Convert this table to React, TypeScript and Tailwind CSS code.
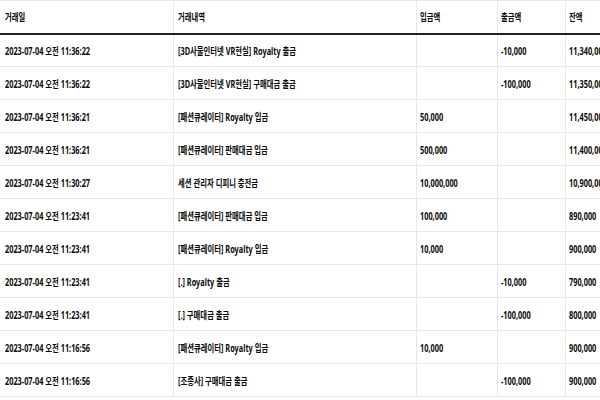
import React from 'react';

interface Row {
  date: string;
  desc: string;
  deposit: string;
  withdraw: string;
  balance: string;
}

const rows: Row[] = [
  { date: '2023-07-04 오전 11:36:22', desc: '[3D사물인터넷 VR현실] Royalty 출금', deposit: '', withdraw: '-10,000', balance: '11,340,000' },
  { date: '2023-07-04 오전 11:36:22', desc: '[3D사물인터넷 VR현실] 구매대금 출금', deposit: '', withdraw: '-100,000', balance: '11,350,000' },
  { date: '2023-07-04 오전 11:36:21', desc: '[패션큐레이터] Royalty 입금', deposit: '50,000', withdraw: '', balance: '11,450,000' },
  { date: '2023-07-04 오전 11:36:21', desc: '[패션큐레이터] 판매대금 입금', deposit: '500,000', withdraw: '', balance: '11,400,000' },
  { date: '2023-07-04 오전 11:30:27', desc: '세션 관리자 디피니 충전금', deposit: '10,000,000', withdraw: '', balance: '10,900,000' },
  { date: '2023-07-04 오전 11:23:41', desc: '[패션큐레이터] 판매대금 입금', deposit: '100,000', withdraw: '', balance: '890,000' },
  { date: '2023-07-04 오전 11:23:41', desc: '[패션큐레이터] Royalty 입금', deposit: '10,000', withdraw: '', balance: '900,000' },
  { date: '2023-07-04 오전 11:23:41', desc: '[.] Royalty 출금', deposit: '', withdraw: '-10,000', balance: '790,000' },
  { date: '2023-07-04 오전 11:23:41', desc: '[.] 구매대금 출금', deposit: '', withdraw: '-100,000', balance: '800,000' },
  { date: '2023-07-04 오전 11:16:56', desc: '[패션큐레이터] Royalty 입금', deposit: '10,000', withdraw: '', balance: '900,000' },
  { date: '2023-07-04 오전 11:16:56', desc: '[조종사] 구매대금 출금', deposit: '', withdraw: '-100,000', balance: '900,000' },
];

// squeezed text, the capture is horizontally condensed
const T: React.FC<{ children: React.ReactNode }> = ({ children }) => (
  <span className="inline-block origin-left scale-x-70 whitespace-nowrap">{children}</span>
);

const App: React.FC = () => {
  return (
    <div
      className="w-[600px] h-[400px] overflow-hidden bg-white text-[#0a0a0a] font-bold text-[10.5px]"
      style={{ fontFamily: '"Noto Sans", "Noto Sans CJK KR", sans-serif' }}
    >
      <table className="table-fixed border-collapse w-[640px]">
        <colgroup>
          <col className="w-[173px]" />
          <col className="w-[243px]" />
          <col className="w-[81px]" />
          <col className="w-[68px]" />
          <col className="w-[75px]" />
        </colgroup>
        <thead>
          <tr className="h-[33px] border-t border-[#e6e8ec] border-b-2 border-b-[#222]">
            <th className="text-left font-bold pl-[5px] pt-[3px] border-r border-[#e6e8ec]"><T>거래일</T></th>
            <th className="text-left font-bold pl-[4px] pt-[3px] border-r border-[#e6e8ec]"><T>거래내역</T></th>
            <th className="text-left font-bold pl-[3px] pt-[3px] border-r border-[#e6e8ec]"><T>입금액</T></th>
            <th className="text-left font-bold pl-[3px] pt-[3px] border-r border-[#e6e8ec]"><T>출금액</T></th>
            <th className="text-left font-bold pl-[3px] pt-[3px]"><T>잔액</T></th>
          </tr>
        </thead>
        <tbody>
          {rows.map((r, i) => (
            <tr key={i} className="h-[33px] border-b border-[#e6e8ec]">
              <td className="pl-[5px] pt-[4px] border-r border-[#e6e8ec]"><T>{r.date}</T></td>
              <td className="pl-[4px] pt-[4px] border-r border-[#e6e8ec]"><T>{r.desc}</T></td>
              <td className="pl-[3px] pt-[4px] border-r border-[#e6e8ec]"><T>{r.deposit}</T></td>
              <td className="pl-[3px] pt-[4px] border-r border-[#e6e8ec]"><T>{r.withdraw}</T></td>
              <td className="pl-[3px] pt-[4px]"><T>{r.balance}</T></td>
            </tr>
          ))}
        </tbody>
      </table>
    </div>
  );
};

export default App;
